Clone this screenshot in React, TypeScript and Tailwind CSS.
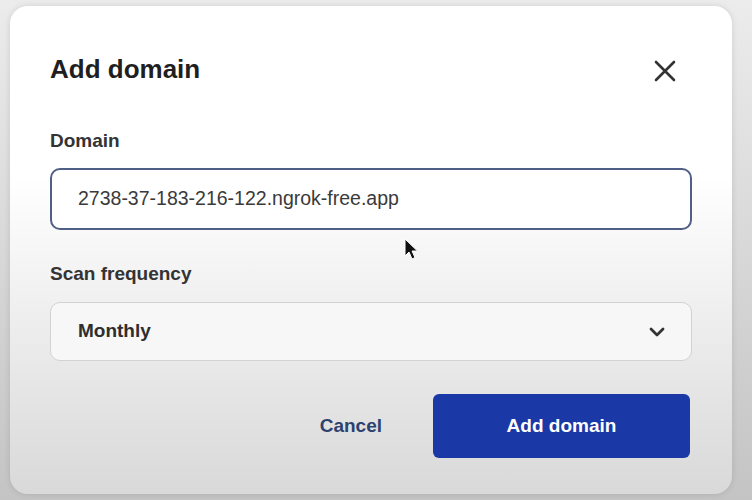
import { useState } from 'react'

function CloseIcon() {
  return (
    <svg width="24" height="24" viewBox="0 0 24 24" fill="none" stroke="#333" strokeWidth="2.6" strokeLinecap="round">
      <path d="M3 3l18 18M21 3L3 21" />
    </svg>
  )
}

function Chevron() {
  return (
    <svg width="16" height="12" viewBox="0 0 16 12" fill="none" stroke="#333" strokeWidth="2.8" strokeLinecap="round" strokeLinejoin="round">
      <path d="M2 3l6 6 6-6" />
    </svg>
  )
}

function Pointer() {
  return (
    <svg width="14" height="22" viewBox="0 0 14 22">
      <path d="M1 1v17l4-4 3 7 3-1.5-3-6.5h5.5z" fill="#111" stroke="#fff" strokeWidth="1" />
    </svg>
  )
}

export default function App() {
  const [domain, setDomain] = useState('2738-37-183-216-122.ngrok-free.app')

  return (
    <div className="w-[752px] h-[500px] overflow-hidden bg-linear-to-b from-[#ececec] to-[#c4c4c4] pt-[6px] pl-[10px] font-['Liberation_Sans',Arial,sans-serif]">
      <div className="relative w-[722px] h-[488px] rounded-[18px] bg-linear-to-b from-white from-35% to-[#d9d9d9] shadow-[0_0_6px_rgba(0,0,0,0.12)] px-[40px] pt-[48px] flex flex-col">
        <div className="flex items-center justify-between h-[30px]">
          <h2 className="text-[26px] leading-[30px] font-bold text-[#1f1f1f]">Add domain</h2>
          <button className="mr-[15px] mt-[4px]">
            <CloseIcon />
          </button>
        </div>

        <label className="mt-[46px] text-[19px] leading-[22px] font-bold text-[#333]">Domain</label>
        <div className="mt-[16px] h-[62px] rounded-[10px] border-2 border-[#4f5f85] bg-white flex items-center px-[26px]">
          <input
            value={domain}
            onChange={(e) => setDomain(e.target.value)}
            className="w-full bg-transparent outline-none text-[19.5px] text-[#3a3a3a] font-['Liberation_Sans',Arial,sans-serif]"
          />
        </div>

        <label className="mt-[33px] text-[19px] leading-[22px] font-bold text-[#333]">Scan frequency</label>
        <div className="mt-[17px] h-[59px] rounded-[10px] border border-[#d2d2d2] bg-[#f7f7f7] flex items-center justify-between pl-[27px] pr-[26px]">
          <span className="text-[19px] font-bold text-[#2e2e2e]">Monthly</span>
          <Chevron />
        </div>

        <div className="mt-[33px] mr-[2px] flex items-center justify-end">
          <button className="text-[19px] font-bold text-[#2d4170] mr-[51px]">Cancel</button>
          <button className="w-[257px] h-[64px] rounded-[6px] bg-[#1a39a6] text-white text-[19px] font-bold">
            Add domain
          </button>
        </div>

        <div className="absolute left-[394px] top-[232px]">
          <Pointer />
        </div>
      </div>
    </div>
  )
}
